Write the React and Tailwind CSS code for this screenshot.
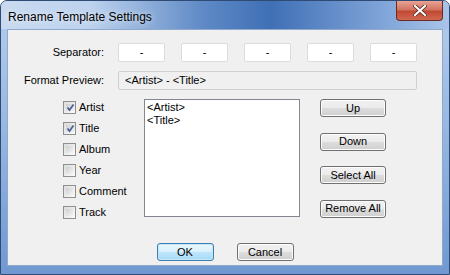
import React from 'react';

const font = { fontFamily: '"Liberation Sans", Arial, sans-serif' };

function Check({ checked }) {
    return (
        <span className="w-[13px] h-[13px] border border-[#8e8f8f] bg-[linear-gradient(135deg,#dcdcdc,#fbfbfb)] p-[2px] flex">
            <span className="flex-1 bg-[linear-gradient(135deg,#cfcfcf,#f4f4f4)] flex items-center justify-center">
                {checked && (
                    <svg width="9" height="9" viewBox="0 0 9 9">
                        <path d="M1.5 4.5 L3.5 7 L7.5 1.5" fill="none" stroke="#4a5f97" strokeWidth="1.7" />
                    </svg>
                )}
            </span>
        </span>
    );
}

function Btn({ children, def }) {
    return (
        <button
            className={
                'h-[18px] rounded-[3px] border text-[11px] leading-none text-black ' +
                (def
                    ? 'border-[#3c7fb1] bg-[linear-gradient(#eaf6fd,#d9f0fc_50%,#bee6fd_50%,#a7d9f5)] shadow-[inset_0_0_0_1px_#c4e5f6]'
                    : 'border-[#707070] bg-[linear-gradient(#f2f2f2,#ebebeb_50%,#dddddd_50%,#cfcfcf)] shadow-[inset_0_0_0_1px_#fcfcfc]')
            }
        >
            {children}
        </button>
    );
}

const fields = [
    { name: 'Artist', on: true },
    { name: 'Title', on: true },
    { name: 'Album', on: false },
    { name: 'Year', on: false },
    { name: 'Comment', on: false },
    { name: 'Track', on: false },
];

export default function App() {
    return (
        <div style={font} className="w-[450px] h-[275px] flex flex-col rounded-t-[7px] overflow-hidden border border-[#2f4b73] bg-[linear-gradient(#b5cdeb,#9bbbe4_40%,#6f98d2)]">
            <div className="h-[28px] flex items-start bg-[linear-gradient(90deg,#c9daf0_0%,#bcd2ee_20%,#5f8ac6_45%,#3f6fb5_60%,#7fa4d8_85%,#a9c4e8_100%)]">
                <span className="pl-[7px] pt-[7px] text-[12px] text-black [text-shadow:0_0_6px_#ffffff]">Rename Template Settings</span>
                <div className="ml-auto mr-[6px] w-[47px] h-[20px] rounded-b-[4px] border border-t-0 border-[#6b2a22] bg-[linear-gradient(#e8a394,#d27462_45%,#c24a35_55%,#d0684f)] flex items-center justify-center">
                    <svg width="14" height="11" viewBox="0 0 14 11">
                        <path d="M2 1 L12 10 M12 1 L2 10" stroke="#4a1a14" strokeWidth="3.6" strokeLinecap="square" />
                        <path d="M2 1 L12 10 M12 1 L2 10" stroke="#ffffff" strokeWidth="2.2" strokeLinecap="square" />
                    </svg>
                </div>
            </div>
            <div className="mx-[6px] h-[237px] bg-[#f0f0f0] border border-[#8ea9cc] flex flex-col pt-[13px] text-[11px] text-black">
                <div className="flex items-center h-[19px]">
                    <span className="w-[96px] text-right">Separator:</span>
                    <div className="ml-[14px] flex gap-[16px]">
                        {[0, 1, 2, 3, 4].map(i => (
                            <div key={i} className="w-[47px] h-[19px] bg-white border border-[#dcdcdc] rounded-[2px] flex items-center justify-center">-</div>
                        ))}
                    </div>
                </div>
                <div className="flex items-center h-[19px] mt-[9px]">
                    <span className="w-[96px] text-right">Format Preview:</span>
                    <div className="ml-[14px] w-[299px] h-[19px] border border-[#d0d0d0] rounded-[2px] flex items-center pl-[6px]">
                        {'<Artist> - <Title>'}
                    </div>
                </div>
                <div className="flex mt-[9px]">
                    <div className="ml-[55px] w-[81px] flex flex-col -mt-[2px]">
                        {fields.map(f => (
                            <div key={f.name} className="h-[21px] flex items-center gap-[3px]">
                                <Check checked={f.on} />
                                <span>{f.name}</span>
                            </div>
                        ))}
                    </div>
                    <div className="w-[156px] h-[118px] bg-white border border-[#828790] px-[2px] pt-[1px] leading-[13px]">
                        <div>{'<Artist>'}</div>
                        <div>{'<Title>'}</div>
                    </div>
                    <div className="ml-[20px] w-[66px] flex flex-col gap-[15.5px]">
                        <Btn>Up</Btn>
                        <Btn>Down</Btn>
                        <Btn>Select All</Btn>
                        <Btn>Remove All</Btn>
                    </div>
                </div>
                <div className="flex justify-center gap-[23px] mt-[20px]">
                    <div className="w-[57px] flex flex-col"><Btn def>OK</Btn></div>
                    <div className="w-[57px] flex flex-col"><Btn>Cancel</Btn></div>
                </div>
            </div>
        </div>
    );
}
